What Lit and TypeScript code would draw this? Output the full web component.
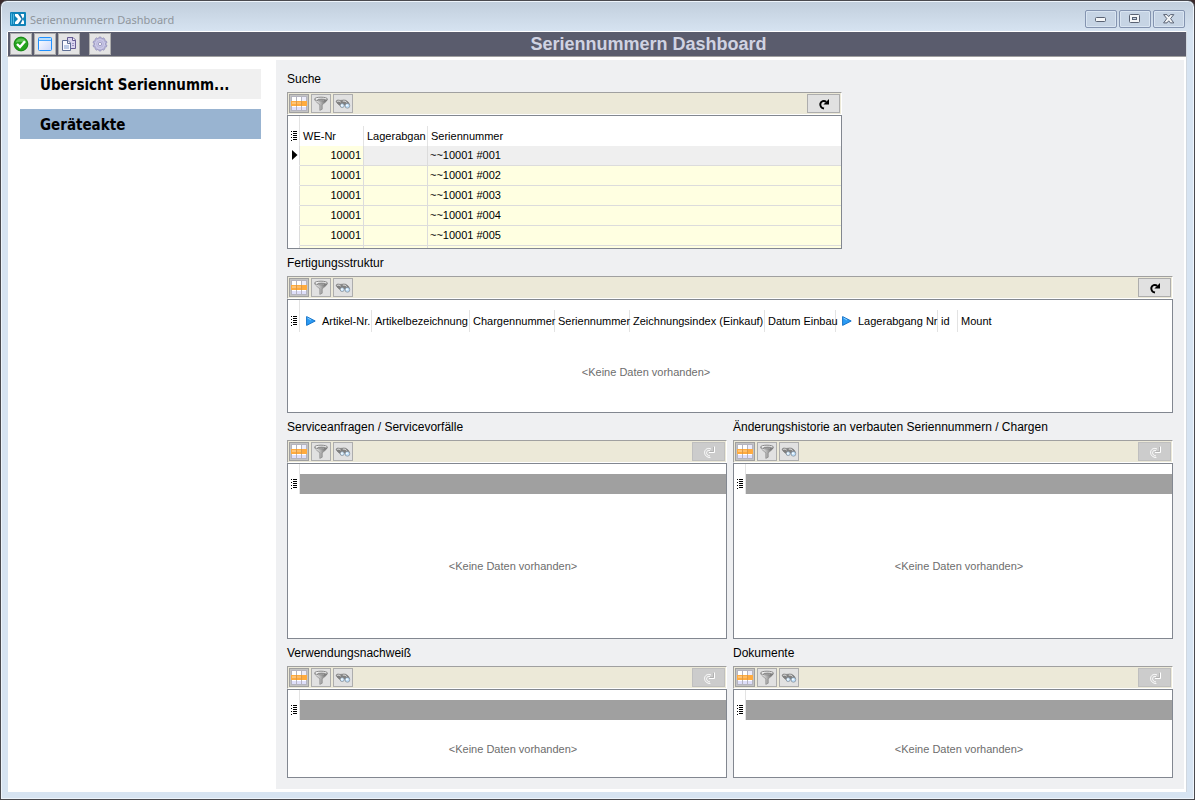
import { LitElement, html, svg, css, nothing, TemplateResult } from "lit";
import { customElement, property, state } from "lit/decorators.js";
import { classMap } from "lit/directives/class-map.js";

interface Column {
  label: string;
  width?: number;
  link?: boolean;
  numeric?: boolean;
}

const EMPTY_TEXT = "<Keine Daten vorhanden>";

const gridIcon = html`<svg width="16" height="15" viewBox="0 0 16 15" shape-rendering="crispEdges" aria-hidden="true">
  <rect width="16" height="15" fill="#fff" />
  <rect x="11" y="1" width="4" height="4" fill="#ececfb" />
  <rect x="1" y="11" width="14" height="3" fill="#dfdffa" />
  <path d="M5.5 0V15M10.5 0V15M.5 0V15M15.5 0V15M0 .5H16M0 14.5H16" stroke="#b4b4bf" />
  <rect x="0" y="5" width="16" height="5" fill="#ffab3f" />
  <rect x="1" y="6" width="4" height="2" fill="#ffc578" />
  <rect x="6" y="6" width="4" height="2" fill="#ffbd66" />
  <path d="M5.5 5V10M10.5 5V10" stroke="#dd9a48" />
</svg>`;

const filterIcon = html`<svg width="16" height="16" viewBox="0 0 16 16" aria-hidden="true">
  <defs>
    <linearGradient id="funnel" x1="0" x2="1">
      <stop offset="0" stop-color="#fafafa" />
      <stop offset=".5" stop-color="#b0b0b0" />
      <stop offset="1" stop-color="#5a5a5a" />
    </linearGradient>
  </defs>
  <path d="M1.6 3.4C2 5.6 5.8 7.4 6.8 9V14.4L9.2 13.2V9C10.2 7.4 14 5.6 14.4 3.4Z" fill="url(#funnel)" stroke="#858585" stroke-width=".7" />
  <ellipse cx="8" cy="3" rx="6.4" ry="1.8" fill="#fbfbfb" stroke="#6e6e6e" stroke-width=".8" />
  <ellipse cx="8.6" cy="3.3" rx="4.4" ry=".9" fill="#8f8f8f" />
</svg>`;

const searchIcon = html`<svg width="16" height="16" viewBox="0 0 16 16" aria-hidden="true">
  <path d="M1.2 5.4C1.4 4 3.4 3.6 5 4.4L7.4 4.2C9 3.4 11.4 4.2 13.4 6.2L14.6 8.6 11 10.4 8 7.8 6 10.2C4 9 1.4 7 1.2 5.4Z" fill="#808080" stroke="#6a6a6a" stroke-width=".5" />
  <path d="M2.2 5.4C3.2 4.8 4.4 5 5.6 6M7.8 5.2C9 4.8 10.4 5.2 11.6 6.4" stroke="#f2f2f2" fill="none" />
  <circle cx="7.2" cy="9.6" r="2" fill="#cfe8fc" stroke="#7e8a95" stroke-width=".7" />
  <circle cx="12.4" cy="9.8" r="2.4" fill="#bfe0fb" stroke="#7e8a95" stroke-width=".7" />
  <circle cx="6.8" cy="9.2" r=".8" fill="#fff" />
  <circle cx="11.9" cy="9.3" r=".9" fill="#fff" />
</svg>`;

const refreshIcon = html`<svg width="14" height="14" viewBox="0 0 14 14" aria-hidden="true">
  <path d="M7 11.6C4.2 11 2.8 9 3.4 6.6C4 4.2 6.8 3 9.2 4.8" fill="none" stroke="#000" stroke-width="2" />
  <path d="M12 2V7.6H6.4Z" fill="#000" />
</svg>`;

const refreshOffIcon = html`<svg width="14" height="14" viewBox="0 0 14 14" aria-hidden="true">
  <path d="M8.4 12.6C5 12.4 2.4 10.4 2.6 7.2C2.8 4.2 6 2.4 9 4" fill="none" stroke="#fff" stroke-width="1" />
  <path d="M8 11C5.6 10.6 4.4 9.2 4.6 7.4C4.8 5.8 6.4 4.8 8 5.8" fill="none" stroke="#fff" stroke-width="1" />
  <path d="M12.5 1.5V7.5H7" fill="none" stroke="#fff" stroke-width="1" />
  <path d="M11.5 2V6.5H7.5" fill="none" stroke="#b2b2b2" stroke-width="1" />
</svg>`;

const listIcon = html`<svg width="7" height="10" viewBox="0 0 7 10" shape-rendering="crispEdges" aria-hidden="true">
  <path d="M0 .5H1M2 .5H6M1 2.5H1M2 2.5H6M0 3.5H1M2 4.5H6M0 6.5H1M2 6.5H6M2 8.5H6M0 9.5H1" stroke="#000" fill="none" />
</svg>`;

const linkArrow = html`<svg class="arrow" width="10" height="10" viewBox="0 0 10 10" aria-hidden="true">
  <path d="M.6 .6L9.2 5 .6 9.4Z" fill="#2b9bf4" stroke="#1673c8" stroke-width="1" />
  <path d="M1.5 2L5 4" stroke="#8fd0ff" stroke-width="1" />
</svg>`;

const rowPointer = html`<svg width="6" height="10" viewBox="0 0 6 10" aria-hidden="true"><path d="M0 0L5.5 5 0 10Z" fill="#000" /></svg>`;

@customElement("data-panel")
export class DataPanel extends LitElement {
  @property() heading = "";
  @property({ attribute: false }) columns: Column[] = [];
  @property({ attribute: false }) rows: string[][] = [];
  @property({ type: Boolean }) inactive = false;
  @state() private selected = 0;

  static styles = css`
    :host {
      display: flex;
      flex-direction: column;
      min-width: 0;
      font-family: "Liberation Sans", Arial, sans-serif;
      color: #000;
    }
    h2 {
      margin: 0;
      height: 27px;
      line-height: 29px;
      font-size: 12px;
      font-weight: 400;
      white-space: nowrap;
    }
    .bar {
      display: flex;
      gap: 2px;
      padding: 1px 1px 0 1px;
      height: 20px;
      border: 1px solid #fff;
      border-top-color: #a0a0a0;
      border-left-color: #a0a0a0;
      background: #ece9d8;
    }
    button {
      box-sizing: border-box;
      display: flex;
      align-items: center;
      justify-content: center;
      width: 20px;
      height: 19px;
      padding: 0;
      border: 1px solid #adadad;
      background: #e1e1e1;
    }
    .first {
      border-color: #a0a0a0;
      box-shadow: inset 0 0 0 1px #c4c4c4;
    }
    .refresh {
      width: 33px;
      margin-left: auto;
    }
    .refresh:disabled {
      border-color: #bfbfbf;
      background: #cccccc;
    }
    .sheet {
      box-sizing: border-box;
      flex: 1 1 0;
      display: flex;
      min-height: 0;
      padding-top: 10px;
      border: 1px solid #828790;
      background: linear-gradient(#e3e3e3, #e3e3e3) 11px 0 / 1px 10px no-repeat #fff;
      overflow: hidden;
    }
    table {
      border-collapse: separate;
      border-spacing: 0;
      table-layout: fixed;
      width: 100%;
      font-size: 11px;
    }
    .sized {
      width: 704px;
    }
    th,
    td {
      box-sizing: border-box;
      height: 20px;
      padding: 0 2px;
      font-weight: 400;
      text-align: left;
      vertical-align: top;
      white-space: nowrap;
      line-height: 18px;
      border-right: 1px solid #dcdcdc;
    }
    th {
      padding: 0 0 0 3px;
      vertical-align: middle;
      line-height: 20px;
      border-right-color: #e3e3e3;
    }
    .sized th {
      height: 22px;
    }
    .mark {
      padding: 0;
      width: 12px;
    }
    .mark svg {
      display: block;
      margin-left: 3px;
    }
    td.mark svg {
      margin: 4px 0 0 4px;
    }
    th:last-child,
    td:last-child {
      border-right: 0;
    }
    .row td {
      background: #ffffe1;
      border-bottom: 1px solid #dcdcdc;
    }
    .row .mark {
      background: #fff;
      border-bottom-color: #fff;
    }
    .row .num {
      text-align: right;
    }
    .current td:not(.mark):not(.num) {
      background: #efefef;
    }
    .blank {
      background: #a0a0a0;
    }
    .empty td {
      height: auto;
      border: 0;
      text-align: center;
      vertical-align: middle;
      color: #6d6d6d;
    }
    .arrow {
      margin: 0 6px 0 3px;
      vertical-align: -1px;
    }
    .rows {
      align-self: flex-start;
    }
  `;

  private renderHead(): TemplateResult {
    const cols = this.columns;
    return html`<thead>
      <tr>
        <th class="mark" aria-label="Spalten">${listIcon}</th>
        ${cols.length
          ? cols.map((c) => html`<th scope="col">${c.link ? linkArrow : nothing}${c.label}</th>`)
          : html`<th class="blank" aria-label="Leer"></th>`}
      </tr>
    </thead>`;
  }

  private renderRow(cells: string[], index: number): TemplateResult {
    const current = index === this.selected;
    return html`<tr class=${classMap({ row: true, current })} @click=${() => (this.selected = index)}>
      <td class="mark">${current ? rowPointer : nothing}</td>
      ${cells.map((c, i) => html`<td class=${classMap({ num: !!this.columns[i].numeric })}>${c}</td>`)}
    </tr>`;
  }

  render() {
    const filled = this.rows.length > 0;
    const sized = !filled && this.columns.length > 0;
    return html`
      <h2>${this.heading}</h2>
      <div class="bar">
        <button class="first" aria-label="Tabelle">${gridIcon}</button>
        <button aria-label="Filter">${filterIcon}</button>
        <button aria-label="Suchen">${searchIcon}</button>
        <button class="refresh" aria-label="Aktualisieren" ?disabled=${this.inactive}>
          ${this.inactive ? refreshOffIcon : refreshIcon}
        </button>
      </div>
      <div class="sheet">
        <table class=${classMap({ sized, rows: filled })}>
          <colgroup>
            <col width="12" />
            ${this.columns.length
              ? this.columns.map((c) => html`<col width=${c.width ?? nothing} />`)
              : html`<col />`}
          </colgroup>
          ${this.renderHead()}
          <tbody>
            ${filled
              ? this.rows.map((r, i) => this.renderRow(r, i))
              : html`<tr class="empty">
                  <td class="mark"></td>
                  <td colspan=${Math.max(1, this.columns.length)}>${EMPTY_TEXT}</td>
                </tr>`}
          </tbody>
        </table>
      </div>
    `;
  }
}

const gearTeeth = Array.from({ length: 10 }, (_, i) => i * 36);

@customElement("app-root")
export class AppRoot extends LitElement {
  @state() private page = 1;

  private readonly pages = ["Übersicht Seriennumm...", "Geräteakte"];

  private readonly searchColumns: Column[] = [
    { label: "WE-Nr", width: 64, numeric: true },
    { label: "Lagerabgan", width: 64 },
    { label: "Seriennummer" },
  ];

  private readonly searchRows = [
    ["10001", "", "~~10001 #001"],
    ["10001", "", "~~10001 #002"],
    ["10001", "", "~~10001 #003"],
    ["10001", "", "~~10001 #004"],
    ["10001", "", "~~10001 #005"],
    ["", "", ""],
  ];

  private readonly structureColumns: Column[] = [
    { label: "Artikel-Nr.", width: 72, link: true },
    { label: "Artikelbezeichnung", width: 98 },
    { label: "Chargennummer", width: 85 },
    { label: "Seriennummer", width: 75 },
    { label: "Zeichnungsindex (Einkauf)", width: 135 },
    { label: "Datum Einbau", width: 71 },
    { label: "Lagerabgang Nr", width: 102, link: true },
    { label: "id", width: 20 },
    { label: "Mount", width: 34 },
  ];

  static styles = css`
    :host {
      display: block;
      font-family: "Liberation Sans", Arial, sans-serif;
      color: #000;
    }
    .desk {
      background: #3a2a2c;
    }
    .window {
      box-sizing: border-box;
      display: flex;
      flex-direction: column;
      min-height: 100vh;
      padding: 1px 7px 7px 7px;
      border: 1px solid #4a4a4f;
      border-radius: 7px 7px 0 0;
      box-shadow: inset 0 0 0 1px #eef5fc;
      background: linear-gradient(#c1cedc, #d7e4f2 32px);
    }
    .caption {
      display: flex;
      align-items: center;
      height: 29px;
      gap: 4px;
      padding: 4px 2px 0 2px;
      box-sizing: border-box;
    }
    .caption span {
      flex: 1;
      padding-top: 2px;
      font: 11px/16px "Noto Sans", "Open Sans", sans-serif;
      color: #8f969d;
    }
    .controls {
      display: flex;
      gap: 2px;
    }
    .controls button {
      display: flex;
      align-items: center;
      justify-content: center;
      box-sizing: border-box;
      width: 32px;
      height: 18px;
      padding: 0;
      border: 1px solid #8494b0;
      border-radius: 2px;
      box-shadow: inset 0 0 0 1px #d9e5f2;
      background: #c6d4e4;
    }
    .client {
      flex: 1;
      display: flex;
      flex-direction: column;
      border-top: 1px solid #fff;
      border-right: 1px solid #d0d7df;
      background: #fff;
    }
    .toolbar {
      display: flex;
      align-items: center;
      gap: 2px;
      height: 24px;
      padding: 0 2px;
      border-bottom: 1px solid #a0a0a0;
      border-left: 1px solid #fff;
      margin-left: -1px;
      background: #5a5c6d;
    }
    .toolbar button {
      display: flex;
      align-items: center;
      justify-content: center;
      box-sizing: border-box;
      width: 22px;
      height: 22px;
      padding: 0;
      border: 1px solid #adadad;
      background: #e4e4e4;
    }
    .toolbar .apart {
      margin-left: 7px;
    }
    h1 {
      flex: 1;
      margin: 0;
      text-align: center;
      font-size: 18px;
      line-height: 24px;
      font-weight: 700;
      color: #d0d3e2;
    }
    .body {
      flex: 1;
      display: grid;
      grid-template-columns: 268px minmax(0, 1fr);
      padding: 3px 2px 3px 0;
    }
    nav {
      display: flex;
      flex-direction: column;
      gap: 10px;
      padding: 9px 15px 0 12px;
    }
    nav a {
      box-sizing: border-box;
      height: 30px;
      padding: 1px 0 0 20px;
      font: bold 15px/30px "DejaVu Sans Condensed", "DejaVu Sans", sans-serif;
      font-stretch: condensed;
      color: #000;
      text-decoration: none;
      white-space: nowrap;
      overflow: hidden;
      background: #f0f0f0;
    }
    nav .active {
      background: #99b4d1;
    }
    main {
      display: grid;
      grid-template-columns: repeat(2, minmax(0, 1fr));
      grid-template-rows: 184px 164px minmax(226px, 1fr) 139px;
      column-gap: 6px;
      padding: 5px 11px 11px;
      background: #eff0f2;
    }
    .wide {
      grid-column: 1 / -1;
    }
    .search {
      max-width: 555px;
    }
  `;

  render() {
    return html`
      <div class="desk">
        <div class="window">
          <header class="caption">
            <svg width="16" height="14" viewBox="0 0 16 14" aria-hidden="true">
              <rect width="16" height="14" rx="1" fill="#0f83b9" />
              <path d="M1.5 1.5V12.5M3.5 2V12" stroke="#5cc4ec" stroke-width=".8" />
              <path d="M5 2H14V12H5Z" fill="#fff" />
              <path d="M5 4L8 7 5 10Z" fill="#0f83b9" />
              <path d="M8 2L11.5 7 8 12H10.5L13 7 10.5 2Z" fill="#0f6fa8" />
              <path d="M14 4.6V9.4L12.8 7Z" fill="#0f83b9" />
            </svg>
            <span>Seriennummern Dashboard</span>
            <div class="controls">
              <button aria-label="Minimieren">
                <svg width="12" height="6" viewBox="0 0 12 6"><rect x=".5" y="1.5" width="10" height="4" rx="1" fill="#f4f6f8" stroke="#596273" /></svg>
              </button>
              <button aria-label="Maximieren">
                <svg width="12" height="10" viewBox="0 0 12 10"><rect x=".5" y=".5" width="10" height="8" rx="1" fill="#f4f6f8" stroke="#596273" /><rect x="3.5" y="3.5" width="4" height="2" fill="#c6d4e4" stroke="#596273" /></svg>
              </button>
              <button aria-label="Schließen">
                <svg width="12" height="10" viewBox="0 0 12 10"><path d="M.6 .6H4L5.7 2.6 7.4 .6H10.8L7.6 4.6 10.8 8.9H7.4L5.7 6.8 4 8.9H.6L3.8 4.6Z" fill="#f4f6f8" stroke="#596273" stroke-linejoin="round" /></svg>
              </button>
            </div>
          </header>
          <div class="client">
            <div class="toolbar">
              <button aria-label="Übernehmen">
                <svg width="16" height="16" viewBox="0 0 16 16">
                  <circle cx="8" cy="8" r="6.9" fill="#23a31c" stroke="#128210" />
                  <path d="M2.5 6.5A5.8 5.8 0 0 1 13.5 6.5Q8 5 2.5 6.5Z" fill="#5cc552" />
                  <path d="M4 8L7 11 12 5.2" fill="none" stroke="#fff" stroke-width="2.4" />
                </svg>
              </button>
              <button aria-label="Fenster">
                <svg width="16" height="16" viewBox="0 0 16 16">
                  <defs><linearGradient id="pane" x2="1" y2="1"><stop stop-color="#fff" /><stop offset="1" stop-color="#ccd8fb" /></linearGradient></defs>
                  <rect x="1.5" y="1.5" width="13" height="13" rx="1" fill="url(#pane)" stroke="#1e90ff" />
                  <rect x="2" y="2" width="12" height="2" fill="#b9defd" />
                  <path d="M2 4.5H14" stroke="#4aa8ff" />
                </svg>
              </button>
              <button aria-label="Kopieren">
                <svg width="16" height="16" viewBox="0 0 16 16">
                  <path d="M6.5 1.5H12L14.5 4V12.5H6.5Z" fill="#d9d4ee" stroke="#665c94" />
                  <path d="M11.5 2V4.5H14.5" fill="#fff" stroke="#665c94" />
                  <path d="M1.5 4.5H7L9.5 7V14.5H1.5Z" fill="#f7f9ff" stroke="#5f6f96" />
                  <path d="M6.5 4.5V7.5H9.5" fill="none" stroke="#5f6f96" />
                  <path d="M3 9H8V13H3Z" fill="#bccbe6" />
                  <path d="M11 7.5H13M11 9.5H13" stroke="#9c94c2" />
                </svg>
              </button>
              <button class="apart" aria-label="Einstellungen">
                <svg width="16" height="16" viewBox="0 0 16 16">
                  ${gearTeeth.map((a) => svg`<rect x="6.7" y="1" width="2.6" height="3" rx=".8" fill="#b5b3da" stroke="#8582b0" stroke-width=".6" transform="rotate(${a} 8 8)" />`)}
                  <circle cx="8" cy="8" r="5.2" fill="#cbc9e8" />
                  <circle cx="8" cy="8" r="3.4" fill="none" stroke="#b3b0d6" stroke-width=".8" />
                  <circle cx="8" cy="8" r="1.7" fill="#f0f0f6" stroke="#8e8bb6" stroke-width=".8" />
                </svg>
              </button>
              <h1>Seriennummern Dashboard</h1>
            </div>
            <div class="body">
              <nav>
                ${this.pages.map(
                  (p, i) => html`<a href="#" class=${classMap({ active: i === this.page })}
                    @click=${(e: Event) => { e.preventDefault(); this.page = i; }}>${p}</a>`
                )}
              </nav>
              <main>
                <data-panel class="wide search" heading="Suche" .columns=${this.searchColumns} .rows=${this.searchRows}></data-panel>
                <data-panel class="wide" heading="Fertigungsstruktur" .columns=${this.structureColumns}></data-panel>
                <data-panel heading="Serviceanfragen / Servicevorfälle" inactive></data-panel>
                <data-panel heading="Änderungshistorie an verbauten Seriennummern / Chargen" inactive></data-panel>
                <data-panel heading="Verwendungsnachweiß" inactive></data-panel>
                <data-panel heading="Dokumente" inactive></data-panel>
              </main>
            </div>
          </div>
        </div>
      </div>
    `;
  }
}
